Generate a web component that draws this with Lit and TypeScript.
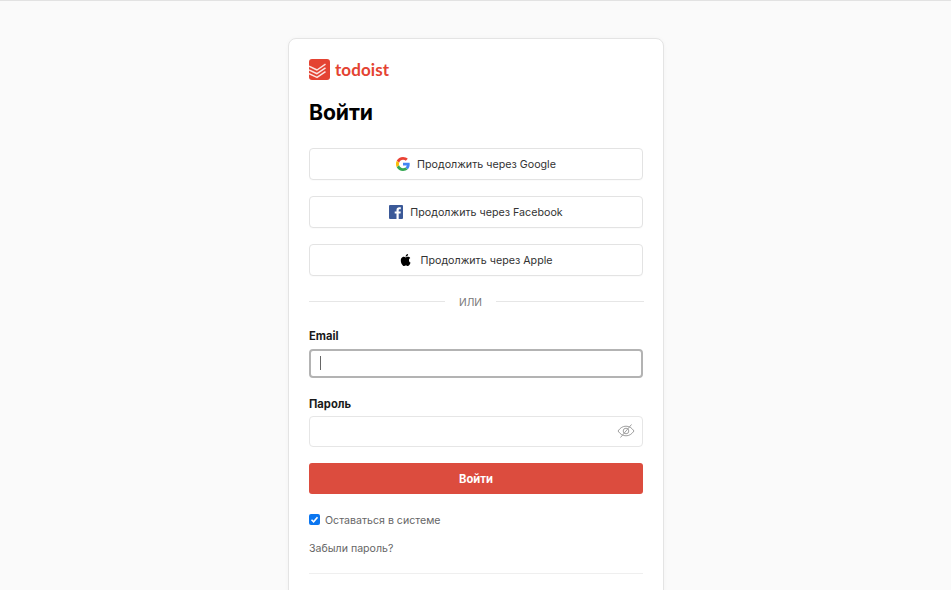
import { LitElement, html, css } from "lit";
import { customElement } from "lit/decorators.js";

@customElement("app-root")
export class AppRoot extends LitElement {
  static styles = css`
    :host { display: block; height: 590px; overflow: hidden; background: #fafafa; font-family: Inter, "Liberation Sans", sans-serif; color: #202020; }
    * { box-sizing: border-box; }
    .page { height: 590px; border-top: 1px solid #e2e2e2; padding: 37px 0 0 288px; overflow: hidden; }
    .card { width: 376px; height: 640px; background: #fff; border: 1px solid #e4e4e4; border-radius: 8px; padding: 20px 20px 0 20px; box-shadow: 0 0 4px rgba(0,0,0,.03); }
    .logo { display: flex; align-items: center; gap: 5px; height: 21px; }
    .logo svg { display: block; }
    .wordmark { font-family: Lato, sans-serif; font-weight: 700; font-size: 17px; color: #e44332; letter-spacing: 0.1px; line-height: 21px; }
    h1 { margin: 19px 0 0; font-size: 21.2px; line-height: 26px; font-weight: 700; color: #000; letter-spacing: -0.1px; }
    .social { margin-top: 23px; display: flex; flex-direction: column; gap: 16.5px; }
    .sbtn { height: 31.5px; border: 1px solid #e3e3e3; border-radius: 4px; background: #fff; display: flex; align-items: center; justify-content: center; gap: 7px; font-size: 10.7px; color: #333; box-shadow: 0 1px 1px rgba(0,0,0,.02); }
    .sbtn svg { display: block; flex: none; }
    .sbtn span { padding-top: 1px; }
    .or { margin-top: 18px; display: flex; align-items: center; gap: 14px; font-size: 10.2px; color: #777; line-height: 16px; margin-right: -1px; }
    .or i { flex: 1; height: 1px; background: #e6e6e6; }
    .or i:first-child { flex: 0 0 136px; }
    label.f { display: block; font-size: 11.2px; font-weight: 700; color: #1a1a1a; line-height: 16px; }
    .l1 { margin-top: 18.5px; }
    .l2 { margin-top: 18px; }
    .input { border-radius: 4px; background: #fff; display: flex; align-items: center; justify-content: space-between; }
    .focus { margin-top: 4.5px; height: 29.5px; border: 2px solid #b3b3b3; padding-left: 9px; }
    .caret { width: 1px; height: 14px; background: #666; }
    .pw { margin-top: 4px; height: 30.5px; border: 1px solid #e6e6e6; padding-right: 7px; justify-content: flex-end; }
    .submit { margin-top: 16.5px; height: 31px; border-radius: 3px; background: #dc4c3e; color: #fff; font-size: 11.2px; font-weight: 700; display: flex; align-items: center; justify-content: center; }
    .check { margin-top: 20px; display: flex; align-items: center; gap: 5px; font-size: 10.6px; color: #666; line-height: 14px; }
    .box { width: 11px; height: 11px; border-radius: 2px; background: #0b76f0; display: flex; align-items: center; justify-content: center; margin-top: -4px; }
    .forgot { margin-top: 14px; font-size: 10.6px; color: #666; line-height: 14px; }
    .rule { margin-top: 17px; height: 1px; background: #efefef; }
  `;

  render() {
    return html`<div class="page"><div class="card">
      <div class="logo">
        <svg width="21" height="21" viewBox="0 0 21 21">
          <rect width="21" height="21" rx="3" fill="#e44332"/>
          <g fill="none" stroke="#fff" stroke-opacity=".85" stroke-width="1.5" stroke-linejoin="round">
            <path d="M0 7.2 L8 11 L16.5 5.2"/>
            <path d="M0 10.9 L8 14.7 L16.5 8.9"/>
            <path d="M0 14.6 L8 18.4 L16.5 12.6"/>
          </g>
        </svg>
        <span class="wordmark">todoist</span>
      </div>
      <h1>Войти</h1>
      <div class="social">
        <div class="sbtn">
          <svg width="14" height="14" viewBox="0 0 48 48">
            <path fill="#EA4335" d="M24 9.5c3.9 0 7 1.3 9.5 3.7l7-7C36.300 2.400 30.700 0 24 0 14.600 0 6.500 5.400 2.600 13.200l8.200 6.400C12.700 13.600 17.900 9.500 24 9.500z"/>
            <path fill="#4285F4" d="M47 24.500c0-1.700-.1-3-.4-4.500H24v9h13c-.5 2.800-2.100 5.200-4.500 6.800l7.900 6.100C45 37.700 47 31.700 47 24.500z"/>
            <path fill="#FBBC05" d="M10.800 28.700c-.5-1.400-.8-3-.8-4.700s.3-3.300.8-4.700l-8.200-6.400C.9 16.300 0 20 0 24s.9 7.700 2.600 11.100l8.200-6.400z"/>
            <path fill="#34A853" d="M24 48c6.500 0 11.900-2.100 15.900-5.800L32 36.100c-2.200 1.500-5 2.400-8 2.400-6.100 0-11.300-4.100-13.200-9.800l-8.200 6.400C6.500 42.600 14.600 48 24 48z"/>
          </svg>
          <span>Продолжить через Google</span>
        </div>
        <div class="sbtn">
          <svg width="14" height="14" viewBox="0 0 14 14">
            <rect width="14" height="14" rx="1" fill="#3b5998"/>
            <path fill="#fff" d="M9.700 14V8.600h1.800l.3-2.100H9.700V5.200c0-.6.200-1 1-1h1.100V2.300c-.2 0-.8-.1-1.600-.1-1.600 0-2.700 1-2.700 2.800v1.500H5.700v2.100h1.800V14z"/>
          </svg>
          <span>Продолжить через Facebook</span>
        </div>
        <div class="sbtn">
          <svg width="14" height="14" viewBox="0 0 24 24">
            <path fill="#000" d="M17.050 12.540c-.03-2.600 2.120-3.850 2.220-3.910-1.210-1.770-3.090-2.010-3.760-2.040-1.600-.16-3.120.94-3.930.94-.81 0-2.060-.92-3.390-.89-1.740.03-3.350 1.010-4.250 2.570-1.810 3.140-.46 7.800 1.300 10.350.86 1.250 1.890 2.650 3.240 2.600 1.300-.05 1.790-.84 3.360-.84 1.570 0 2.010.84 3.390.81 1.400-.02 2.280-1.270 3.140-2.530.99-1.450 1.400-2.850 1.420-2.930-.03-.01-2.710-1.040-2.740-4.130zM14.470 4.900c.72-.87 1.200-2.080 1.070-3.290-1.030.04-2.290.69-3.030 1.560-.66.77-1.240 2-1.090 3.180 1.150.09 2.330-.59 3.050-1.450z"/>
          </svg>
          <span>Продолжить через Apple</span>
        </div>
      </div>
      <div class="or"><i></i><span>ИЛИ</span><i></i></div>
      <label class="f l1">Email</label>
      <div class="input focus"><div class="caret"></div></div>
      <label class="f l2">Пароль</label>
      <div class="input pw">
        <svg width="18" height="18" viewBox="0 0 18 18" fill="none" stroke="#a0a0a0" stroke-width="1">
          <path d="M1 9 C3.500 5.500 6 4.200 9 4.200 S14.500 5.500 17 9 C14.500 12.500 12 13.800 9 13.800 S3.500 12.500 1 9 Z"/>
          <circle cx="9" cy="9" r="2.800"/>
          <path d="M3.500 15.500 L14.500 2.500"/>
        </svg>
      </div>
      <div class="submit">Войти</div>
      <div class="check">
        <div class="box">
          <svg width="9" height="9" viewBox="0 0 9 9"><path d="M1.500 4.700 L3.600 6.800 L7.500 2.200" fill="none" stroke="#fff" stroke-width="1.600"/></svg>
        </div>
        <span>Оставаться в системе</span>
      </div>
      <div class="forgot">Забыли пароль?</div>
      <div class="rule"></div>
    </div></div>`;
  }
}
